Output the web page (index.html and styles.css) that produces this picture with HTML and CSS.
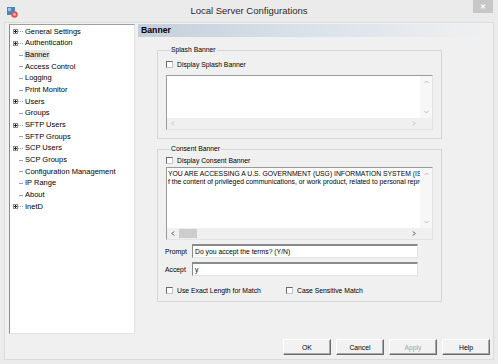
FILE: index.html
```html
<!DOCTYPE html>
<html lang="en">
<head>
    <meta charset="UTF-8">
    <title>Local Server Configurations</title>
    <link rel="stylesheet" href="styles.css">
</head>
<body>
    <svg class="defs" width="0" height="0">
        <symbol id="plus" viewBox="0 0 14 9">
            <rect x="3.5" y="2.5" width="4" height="4" fill="#fff" stroke="#8e8e8e"/>
            <path d="M4 4.5h3M5.5 3v3" stroke="#222"/>
            <path d="M8 4.5h5" stroke="#a0a0a0" stroke-dasharray="1 1"/>
        </symbol>
        <symbol id="leaf" viewBox="0 0 14 9">
            <path d="M9 4.5h4" stroke="#a0a0a0"/>
        </symbol>
        <symbol id="up" viewBox="0 0 5 4"><polyline points="0.5,3 2.5,1 4.5,3" fill="none" stroke="currentColor"/></symbol>
        <symbol id="down" viewBox="0 0 5 4"><polyline points="0.5,1 2.5,3 4.5,1" fill="none" stroke="currentColor"/></symbol>
        <symbol id="left" viewBox="0 0 4 5"><polyline points="3,0.5 1,2.5 3,4.5" fill="none" stroke="currentColor"/></symbol>
        <symbol id="right" viewBox="0 0 4 5"><polyline points="1,0.5 3,2.5 1,4.5" fill="none" stroke="currentColor"/></symbol>
    </svg>

    <div class="window">
        <div class="titlebar">
            <svg class="app-icon" width="11" height="11" viewBox="0 0 11 11">
                <rect x="0" y="0" width="8" height="8" fill="#4f86b8"/>
                <rect x="1" y="1" width="3" height="3" fill="#9cc3e4"/>
                <circle cx="7.5" cy="7.5" r="3.2" fill="#d9534f"/>
                <circle cx="7.5" cy="7.5" r="1.4" fill="#f2b5b3"/>
            </svg>
            <div class="title">Local Server Configurations</div>
            <div class="close">&#x2715;</div>
        </div>

        <div class="client">
            <div class="main">
                <ul class="tree">
                    <li class="node"><svg class="twig"><use href="#plus"/></svg><span>General Settings</span></li>
                    <li class="node"><svg class="twig"><use href="#plus"/></svg><span>Authentication</span></li>
                    <li class="node"><svg class="twig"><use href="#leaf"/></svg><span class="selected">Banner</span></li>
                    <li class="node"><svg class="twig"><use href="#leaf"/></svg><span>Access Control</span></li>
                    <li class="node"><svg class="twig"><use href="#leaf"/></svg><span>Logging</span></li>
                    <li class="node"><svg class="twig"><use href="#leaf"/></svg><span>Print Monitor</span></li>
                    <li class="node"><svg class="twig"><use href="#plus"/></svg><span>Users</span></li>
                    <li class="node"><svg class="twig"><use href="#leaf"/></svg><span>Groups</span></li>
                    <li class="node"><svg class="twig"><use href="#plus"/></svg><span>SFTP Users</span></li>
                    <li class="node"><svg class="twig"><use href="#leaf"/></svg><span>SFTP Groups</span></li>
                    <li class="node"><svg class="twig"><use href="#plus"/></svg><span>SCP Users</span></li>
                    <li class="node"><svg class="twig"><use href="#leaf"/></svg><span>SCP Groups</span></li>
                    <li class="node"><svg class="twig"><use href="#leaf"/></svg><span>Configuration Management</span></li>
                    <li class="node"><svg class="twig"><use href="#leaf"/></svg><span>IP Range</span></li>
                    <li class="node"><svg class="twig"><use href="#leaf"/></svg><span>About</span></li>
                    <li class="node"><svg class="twig"><use href="#plus"/></svg><span>InetD</span></li>
                </ul>

                <div class="panel">
                    <div class="panel-header">Banner</div>

                    <fieldset class="group splash">
                        <legend>Splash Banner</legend>
                        <label class="option"><span class="check"></span>Display Splash Banner</label>
                        <div class="textbox splash-text">
                            <div class="text"></div>
                            <div class="vbar off">
                                <span class="arrow"><svg width="5" height="4"><use href="#up"/></svg></span>
                                <span class="arrow"><svg width="5" height="4"><use href="#down"/></svg></span>
                            </div>
                            <div class="hbar off">
                                <span class="arrow"><svg width="4" height="5"><use href="#left"/></svg></span>
                                <span class="arrow"><svg width="4" height="5"><use href="#right"/></svg></span>
                            </div>
                            <div class="corner"></div>
                        </div>
                    </fieldset>

                    <fieldset class="group consent">
                        <legend>Consent Banner</legend>
                        <label class="option"><span class="check"></span>Display Consent Banner</label>
                        <div class="textbox consent-text">
                            <div class="text">YOU ARE ACCESSING A U.S. GOVERNMENT (USG) INFORMATION SYSTEM (IS) THAT IS PROVIDED FOR USG-AUTHORIZED USE ONLY.
f the content of privileged communications, or work product, related to personal representation or services by attorneys.</div>
                            <div class="vbar off">
                                <span class="arrow"><svg width="5" height="4"><use href="#up"/></svg></span>
                                <span class="arrow"><svg width="5" height="4"><use href="#down"/></svg></span>
                            </div>
                            <div class="hbar">
                                <span class="arrow"><svg width="4" height="5"><use href="#left"/></svg></span>
                                <span class="thumb"></span>
                                <span class="arrow push"><svg width="4" height="5"><use href="#right"/></svg></span>
                            </div>
                            <div class="corner"></div>
                        </div>

                        <div class="field prompt">
                            <span class="field-label">Prompt</span>
                            <span class="input">Do you accept the terms? (Y/N)</span>
                        </div>
                        <div class="field">
                            <span class="field-label">Accept</span>
                            <span class="input">y</span>
                        </div>

                        <div class="options">
                            <label class="option wide"><span class="check"></span>Use Exact Length for Match</label>
                            <label class="option"><span class="check"></span>Case Sensitive Match</label>
                        </div>
                    </fieldset>
                </div>
            </div>

            <div class="buttons">
                <button>OK</button>
                <button>Cancel</button>
                <button disabled>Apply</button>
                <button>Help</button>
            </div>
        </div>
    </div>
</body>
</html>
```

FILE: styles.css
```css
html, body {
    margin: 0;
    padding: 0;
}
body {
    width: 498px;
    height: 364px;
    background-color: #ebebeb;
    font-family: "Liberation Sans", Arial, sans-serif;
    color: #000;
    overflow: hidden;
}
.defs {
    position: absolute;
}
.window {
    height: 364px;
    display: flex;
    flex-direction: column;
}
.titlebar {
    height: 22px;
    display: grid;
    grid-template-columns: 1fr auto 1fr;
    align-items: start;
}
.app-icon {
    margin: 7px 0 0 7px;
}
.title {
    font-size: 9.5px;
    line-height: 22px;
    color: #2b2b2b;
}
.close {
    justify-self: end;
    width: 20px;
    height: 13px;
    margin-right: 5px;
    background-color: #c7c7c7;
    color: #fff;
    font-size: 7px;
    line-height: 13px;
    text-align: center;
    font-weight: bold;
}
.client {
    margin: 0 4px;
    height: 338px;
    box-sizing: border-box;
    border: 1px solid #dcdcdc;
    background-color: #f0f0f0;
    display: flex;
    flex-direction: column;
}
.main {
    height: 312px;
    display: flex;
}
.tree {
    list-style: none;
    margin: 1px 0 0 4px;
    padding: 1px 0 0 0;
    width: 126px;
    height: 310px;
    box-sizing: border-box;
    background-color: #fff;
    border: 1px solid #e3e3e3;
    border-top-color: #a0a0a0;
    border-left-color: #8c8c8c;
    font-size: 7.5px;
}
.node {
    display: flex;
    align-items: center;
    height: 11.67px;
    white-space: nowrap;
}
.twig {
    width: 14px;
    height: 9px;
    flex: none;
}
.node span {
    padding: 0 1px;
    line-height: 10px;
}
.node .selected {
    background-color: #e6e6e6;
}
.panel {
    margin: 1px 0 0 3px;
    flex: 1;
    font-size: 6.8px;
}
.panel-header {
    height: 13px;
    line-height: 13px;
    padding-left: 3px;
    font-size: 8.7px;
    font-weight: bold;
    background: linear-gradient(to right, #c3cfdb, #d9e0e8 45%, #eceef0 90%, #f0f0f0);
}
.group {
    width: 285px;
    box-sizing: border-box;
    margin: 0 0 0 19px;
    padding: 0 8px;
    border: 1px solid #d5d5d5;
    min-width: 0;
}
.group legend {
    margin-left: 4px;
    padding: 0 1px;
    line-height: 10px;
    height: 10px;
}
.splash {
    margin-top: 8px;
    padding-bottom: 8px;
}
.splash .option {
    margin-top: 4px;
}
.consent {
    margin-top: 5px;
    padding-bottom: 6px;
}
.consent > .option {
    margin-top: 1px;
}
.option {
    display: flex;
    align-items: center;
    height: 10px;
    white-space: nowrap;
}
.check {
    width: 7px;
    height: 7px;
    box-sizing: border-box;
    margin-right: 4px;
    background-color: #fff;
    border: 1px solid #c6c6c6;
    border-top-color: #6a6a6a;
    border-left-color: #6a6a6a;
}
.textbox {
    display: grid;
    grid-template-columns: 1fr 12px;
    grid-template-rows: 1fr 11px;
    background-color: #fff;
    border: 1px solid #e3e3e3;
    border-top-color: #9a9a9a;
    border-left-color: #9a9a9a;
}
.splash-text {
    margin-top: 6px;
    height: 53px;
}
.consent-text {
    margin-top: 2px;
    height: 71px;
}
.text {
    overflow: hidden;
    white-space: pre;
    padding: 2px 0 0 1px;
    line-height: 8px;
}
.vbar {
    display: flex;
    flex-direction: column;
    justify-content: space-between;
    background-color: #f7f7f7;
    color: #3c3c3c;
}
.hbar {
    display: flex;
    align-items: stretch;
    background-color: #f0f0f0;
    color: #3c3c3c;
}
.vbar.off, .hbar.off {
    color: #bdbdbd;
    justify-content: space-between;
}
.arrow {
    width: 12px;
    height: 11px;
    display: flex;
    align-items: center;
    justify-content: center;
    flex: none;
}
.vbar .arrow {
    height: 12px;
}
.thumb {
    width: 18px;
    margin: 1px 0;
    background-color: #cdcdcd;
}
.push {
    margin-left: auto;
}
.corner {
    background-color: #f0f0f0;
}
.field {
    display: flex;
    align-items: center;
    margin-top: 4px;
}
.field.prompt {
    margin-top: 4px;
}
.field-label {
    width: 27px;
    margin-left: -1px;
}
.input {
    width: 226px;
    height: 14px;
    box-sizing: border-box;
    padding-left: 2px;
    line-height: 11px;
    background-color: #fff;
    border: 1px solid #e3e3e3;
    border-top: 2px solid #8a8a8a;
    border-left-color: #8a8a8a;
    white-space: nowrap;
}
.options {
    display: flex;
    margin-top: 9px;
}
.option.wide {
    width: 120px;
}
.buttons {
    display: flex;
    justify-content: flex-end;
    gap: 5px;
    margin-top: 4px;
    padding-right: 3px;
}
button {
    width: 48px;
    height: 16px;
    padding: 0;
    font-family: "Liberation Sans", Arial, sans-serif;
    font-size: 6.8px;
    color: #000;
    background-color: #f2f2f2;
    border: 1px solid;
    border-color: #fff #6b6b6b #6b6b6b #fff;
    box-shadow: inset -1px -1px #a8a8a8;
}
button:disabled {
    color: #a3a3a3;
}
```
